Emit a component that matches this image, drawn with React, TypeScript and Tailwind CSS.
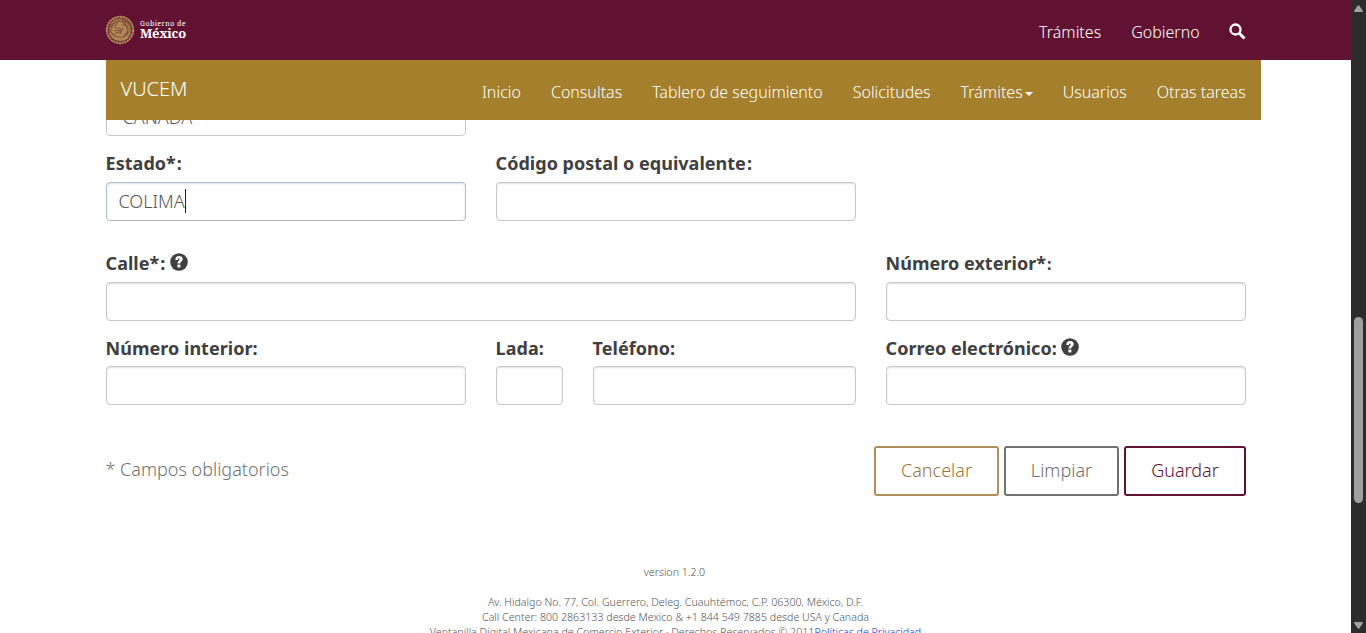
import type { ReactNode } from "react";

function HelpIcon() {
  return (
    <svg viewBox="0 0 18 18" className="ml-[4.5px] h-[18px] w-[18px] shrink-0 -translate-y-[2px]">
      <circle cx="9" cy="9" r="8.8" fill="#404041" />
      <path d="M5.3 7C5.4 4.4 6.8 3 9.1 3c2.1 0 3.6 1.3 3.6 3.1 0 2.6-2.4 2.5-2.4 4.4H7.5c0-2.8 2.1-2.8 2.1-4.1 0-.7-.3-1-.8-1-.6 0-.9.5-.9 1.6z" fill="#fff" />
      <rect x="7.4" y="11.6" width="3" height="2.8" fill="#fff" />
    </svg>
  );
}

function Field({ label, value, help, focused, className }: { label: ReactNode; value?: string; help?: boolean; focused?: boolean; className: string }) {
  return (
    <div className={className}>
      <div className="-ml-[0.4px] flex h-[25px] items-center text-[18px] leading-[25px] font-bold tracking-[0.02px] whitespace-nowrap text-[#404041]">
        <span>{label}</span>
        {help && <HelpIcon />}
      </div>
      <div
        className={
          focused
            ? "mt-[6px] flex h-[39px] items-center rounded-[4px] border border-[#a9c0d1] pl-[11.5px] text-[18px] font-light text-[#545454] shadow-[inset_0_1px_2px_rgba(0,0,0,0.12)]"
            : "mt-[6px] flex h-[39px] items-center rounded-[4px] border border-[#c8c8c8] pl-3 text-[18px] font-light text-[#545454] shadow-[inset_0_1px_2px_rgba(0,0,0,0.12)] in-[.tight]:mt-[5px]"
        }
      >
        {value}
        {focused && <span className="-mt-px h-[24px] w-px bg-[#222]" />}
      </div>
    </div>
  );
}

function Logo() {
  return (
    <div className="flex items-center">
      <svg viewBox="0 0 30 30" className="h-[30px] w-[30px]" fill="none">
        <circle cx="15" cy="15" r="13.2" stroke="#b08a55" strokeWidth="2" strokeDasharray="2.4 0.4" />
        <circle cx="15" cy="15" r="11.7" fill="#88583f" />
        <path d="M7 14c1-5 5-8 9-7l3 2-3 1c3 0 6 2 6 6l-2 3-3 3-6-1-4-4z" fill="#b08a55" />
        <path d="M6 9c3-3 7-5 11-4m4 3c3 3 4 6 3 10M5 13l3 5" stroke="#a87f4f" strokeWidth="1.3" />
        <path d="M9 11c2 2 3 3 7 2m-7 2c3 1 5 1 8-1m-7 4c3 0 5-1 7-3m-4-8-3 4m8 2-3 6" stroke="#7a4137" strokeWidth="0.8" />
        <path d="M5 18c3 7 16 8 20 0M8 22c4 4 11 4 15 0" stroke="#c09b62" strokeWidth="1.4" strokeDasharray="2 0.7" />
      </svg>
      <div className="-mt-px ml-[5px] flex flex-col font-['Noto_Serif','DejaVu_Serif',serif] whitespace-nowrap text-white">
        <span className="text-[7px] leading-[8px] tracking-[0.45px]">Gobierno de</span>
        <span className="text-[13px] leading-[11px] font-bold tracking-[-0.3px]">México</span>
      </div>
    </div>
  );
}

export default function App() {
  return (
    <div className="flex h-[633px] w-[1366px] overflow-hidden bg-white font-['Noto_Sans',sans-serif]">
      <div className="flex h-[633px] w-[1351px] flex-col overflow-hidden">
        <header className="flex h-[60px] shrink-0 items-center bg-[#611232] pr-[105px] pl-[105px] text-white">
          <Logo />
          <nav className="ml-auto flex items-center pt-1 text-[16px] font-light">
            <span>Trámites</span>
            <span className="ml-[30px]">Gobierno</span>
            <svg viewBox="0 0 17 17" className="-mt-[2px] ml-[29.4px] h-[17px] w-[17px]" fill="none" stroke="#fff">
              <circle cx="6.5" cy="6.5" r="5" strokeWidth="2.3" />
              <path d="m10.3 10.3 5.2 5.2" strokeWidth="3" />
            </svg>
          </nav>
        </header>

        <div className="z-10 ml-[106px] flex h-[60px] w-[1155px] shrink-0 items-center bg-[#a57f2c] pr-[15.3px] pl-[14.5px] text-white">
          <span className="-mt-[2px] text-[20px] font-light">VUCEM</span>
          <nav className="ml-auto flex items-center gap-[30px] pt-1 text-[16px] font-light whitespace-nowrap">
            <span>Inicio</span>
            <span>Consultas</span>
            <span>Tablero de seguimiento</span>
            <span>Solicitudes</span>
            <span className="flex items-center">
              Trámites
              <svg viewBox="0 0 8 4" className="mt-1 ml-[2px] h-1 w-2" fill="#fff">
                <path d="M0 0h8L4 4z" />
              </svg>
            </span>
            <span>Usuarios</span>
            <span>Otras tareas</span>
          </nav>
        </div>

        <main className="ml-[106px] w-[1140px] shrink-0">
          <div className="flex h-[16px] w-[360px] items-end overflow-hidden">
            <div className="flex h-[39px] w-full shrink-0 items-center rounded-[4px] border border-[#c8c8c8] pt-[2px] pl-[15.5px] text-[18px] font-light text-[#545454]">CANADA</div>
          </div>
          <div className="mt-[15px] flex gap-[30px]">
            <Field className="w-[360px]" label={<>Estado*<span className="ml-px">:</span></>} value="COLIMA" focused />
            <Field className="w-[360px]" label={<>Código postal o equivalente<span className="ml-px">:</span></>} />
          </div>
          <div className="mt-[30px] flex gap-[30px]">
            <Field className="w-[750px]" label={<>Calle*<span className="ml-px">:</span></>} help />
            <Field className="w-[360px]" label={<>Número exterior*<span className="ml-px text-[16px]">:</span></>} />
          </div>
          <div className="tight mt-[15px] flex gap-[30px]">
            <Field className="w-[360px]" label="Número interior:" />
            <Field className="w-[67px]" label="Lada:" />
            <Field className="w-[263px]" label="Teléfono:" />
            <Field className="w-[360px]" label="Correo electrónico:" help />
          </div>
          <div className="mt-[41px] flex h-[50px] text-[18px] font-light">
            <span className="mt-[10px] -ml-[0.5px] leading-[27px] text-[#6f7271]">* Campos obligatorios</span>
            <div className="ml-auto flex gap-[5px]">
              <button className="w-[125px] rounded-[3px] border-2 border-[#b38e5d] pb-[2px] text-[#98783f]">Cancelar</button>
              <button className="w-[115px] rounded-[3px] border-2 border-[#6f7271] pb-[2px] text-[#6f7271]">Limpiar</button>
              <button className="w-[122px] rounded-[3px] border-2 border-[#611232] pb-[2px] text-[#611232]">Guardar</button>
            </div>
          </div>
        </main>

        <footer className="mt-[69px] shrink-0 text-center text-[10.65px] leading-[15px] font-light text-[#545454]">
          <p className="-ml-[2px]">version 1.2.0</p>
          <p className="mt-[15px]">Av. Hidalgo No. 77, Col. Guerrero, Deleg. Cuauhtémoc, C.P. 06300, México, D.F.</p>
          <p>Call Center: 800 2863133 desde Mexico &amp; +1 844 549 7885 desde USA y Canada</p>
          <p>
            Ventanilla Digital Mexicana de Comercio Exterior · Derechos Reservados © 2011<span className="text-[#1330d8]">Políticas de Privacidad</span>
          </p>
        </footer>
      </div>

      <div className="flex h-[633px] w-[15px] flex-col items-center bg-[#2c2c2c]">
        <svg viewBox="0 0 9 7" className="mt-[5px] h-[7px] w-[9px] shrink-0" fill="#9f9f9f">
          <path d="M0 6 3.8.6a.9.9 0 0 1 1.4 0L9 6l-.6 1H.6z" />
        </svg>
        <div className="mt-[305px] h-[186px] w-[9px] shrink-0 rounded-full bg-[#9f9f9f]" />
        <svg viewBox="0 0 9 7" className="mt-[119px] h-[7px] w-[9px] shrink-0" fill="#9f9f9f">
          <path d="M0 1 3.8 6.4a.9.9 0 0 0 1.4 0L9 1l-.6-1H.6z" />
        </svg>
      </div>
    </div>
  );
}
